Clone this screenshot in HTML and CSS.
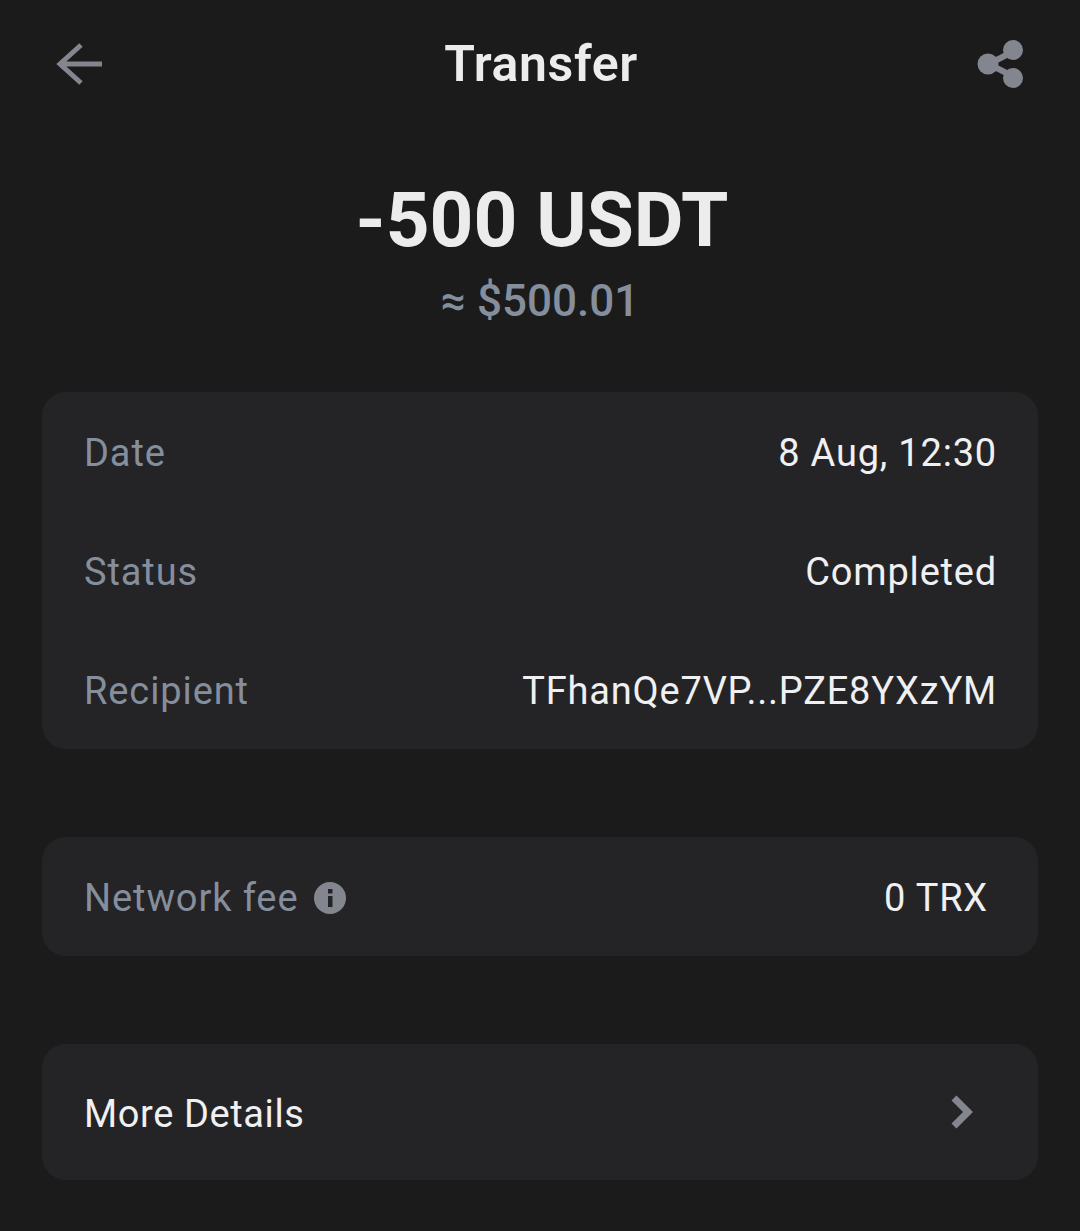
FILE: index.html
```html
<!DOCTYPE html>
<html lang="en">
<head>
    <meta charset="UTF-8">
    <meta name="viewport" content="width=device-width, initial-scale=1.0">
    <title>Transfer</title>
    <link rel="stylesheet" href="styles.css">
</head>
<body>
    <div class="container">
        <div class="header">
            <svg class="back-icon" width="48" height="48" viewBox="0 0 48 48">
                <path d="M25 5 L4 24 L25 43 M4 24 H46" fill="none" stroke="#84868f" stroke-width="5"/>
            </svg>
            <h1>Transfer</h1>
            <svg class="share-icon" width="48" height="50" viewBox="0 0 48 50">
                <path d="M38 12 L13 25 L38 38" fill="none" stroke="#84868f" stroke-width="6"/>
                <circle cx="37" cy="11" r="10" fill="#84868f"/>
                <circle cx="12" cy="25" r="10.5" fill="#84868f"/>
                <circle cx="37" cy="39" r="10" fill="#84868f"/>
            </svg>
        </div>

        <div class="amount">
            <div class="amount-main">-500 USDT</div>
            <div class="amount-fiat">≈ $500.01</div>
        </div>

        <div class="card card-info">
            <div class="row">
                <span class="label">Date</span>
                <span class="value">8 Aug, 12:30</span>
            </div>
            <div class="row">
                <span class="label">Status</span>
                <span class="value">Completed</span>
            </div>
            <div class="row">
                <span class="label">Recipient</span>
                <span class="value">TFhanQe7VP...PZE8YXzYM</span>
            </div>
        </div>

        <div class="card card-fee">
            <div class="label-group">
                <span class="label">Network fee</span>
                <svg class="info-icon" width="32" height="32" viewBox="0 0 32 32">
                    <circle cx="16" cy="16" r="16" fill="#84868f"/>
                    <rect x="14" y="7" width="4.5" height="4.5" fill="#242426"/>
                    <rect x="14" y="14" width="4.5" height="11" fill="#242426"/>
                </svg>
            </div>
            <span class="value fee-value">0 TRX</span>
        </div>

        <div class="card card-more">
            <span class="more-label">More Details</span>
            <svg class="chevron" width="24" height="34" viewBox="0 0 24 34">
                <path d="M4 3 L18 17 L4 31" fill="none" stroke="#84868f" stroke-width="7"/>
            </svg>
        </div>
    </div>
</body>
</html>
```

FILE: styles.css
```css
body {
    margin: 0;
    background-color: #1b1b1c;
    font-family: "Roboto", Arial, sans-serif;
    color: #ececec;
}
.container {
    padding: 0 42px;
}
.header {
    display: flex;
    align-items: center;
    justify-content: space-between;
    height: 127px;
    padding: 0 14px;
}
.header h1 {
    margin: 0;
    font-size: 50px;
    font-weight: 600;
    line-height: 1;
    letter-spacing: 0.6px;
    padding-left: 2px;
}
.amount {
    text-align: center;
    margin-bottom: 66px;
    padding-left: 4px;
}
.amount-main {
    margin-top: 50px;
    font-size: 76.5px;
    font-weight: 700;
    line-height: 86px;
}
.amount-fiat {
    margin-top: 13px;
    padding-right: 4px;
    font-size: 44px;
    font-weight: 500;
    line-height: 50px;
    color: #848e9c;
}
.card {
    background-color: #242426;
    border-radius: 24px;
    padding: 0 42px;
}
.card-info {
    display: flex;
    flex-direction: column;
    height: 357px;
    box-sizing: border-box;
    margin-bottom: 88px;
}
.row {
    display: flex;
    align-items: center;
    justify-content: space-between;
    height: 119px;
    padding-top: 2px;
    box-sizing: border-box;
}
.label {
    font-size: 38px;
    letter-spacing: 0.9px;
    color: #848e9c;
}
.value {
    font-size: 38px;
    font-weight: 400;
    letter-spacing: 0.8px;
    margin-right: -1px;
    color: #f0f0f2;
}
.label-group {
    display: flex;
    align-items: center;
    gap: 16px;
}
.card-fee {
    display: flex;
    align-items: center;
    justify-content: space-between;
    height: 119px;
    margin-bottom: 88px;
    padding-top: 2px;
    box-sizing: border-box;
}
.fee-value {
    margin-right: 8px;
}
.card-more {
    display: flex;
    align-items: center;
    justify-content: space-between;
    height: 136px;
    padding-right: 64px;
}
.more-label {
    font-size: 38px;
    letter-spacing: 0.6px;
    padding-top: 4px;
    color: #f0f0f2;
}
```
